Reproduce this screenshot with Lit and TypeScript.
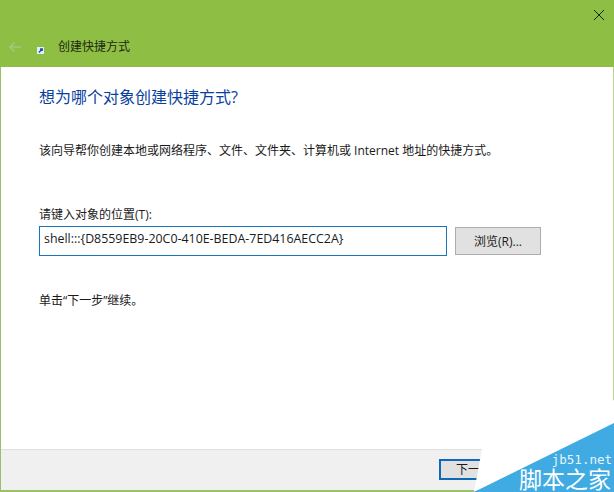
import { LitElement, html, css } from "lit";
import { customElement } from "lit/decorators.js";

@customElement("app-root")
export class AppRoot extends LitElement {
  static styles = css`
    :host {
      display: block;
      position: relative;
      width: 614px;
      height: 492px;
      overflow: hidden;
      font-family: "Open Sans", "Noto Sans CJK SC", sans-serif;
      font-size: 12px;
      color: #1a1a1a;
    }
    .win {
      box-sizing: border-box;
      width: 614px;
      height: 492px;
      display: flex;
      flex-direction: column;
      background: #fff;
      border-left: 1px solid #9cbf6a;
      border-right: 1px solid #b9d28f;
      border-bottom: 2px solid #9cbf6a;
    }
    .head {
      height: 67px;
      margin-left: -1px;
      margin-right: -1px;
      background: #8fbe44;
      display: flex;
      flex-direction: column;
      flex: none;
    }
    .close-row {
      display: flex;
      justify-content: flex-end;
      padding: 9px 9px 0 0;
      height: 14px;
    }
    .title-row {
      display: flex;
      align-items: center;
      margin-top: 15px;
      height: 18px;
      padding-left: 8px;
    }
    .back { width: 14px; height: 12px; }
    .app-icon { width: 7px; height: 7px; margin-left: 15px; margin-top: 7px; }
    .title {
      margin-left: 14px;
      font-size: 12px;
      line-height: 18px;
      color: #1c2a10;
      white-space: nowrap;
    }
    .body {
      flex: 1;
      padding: 20px 0 0 38px;
      display: flex;
      flex-direction: column;
      min-height: 0;
    }
    h1 {
      margin: 0;
      font-weight: 400;
      font-size: 16px;
      line-height: 20px;
      color: #0a3f9e;
      white-space: nowrap;
    }
    .intro { margin: 35px 0 0; line-height: 18px; white-space: nowrap; }
    .label { margin: 46px 0 0; line-height: 18px; white-space: nowrap; }
    .field-row { display: flex; align-items: center; gap: 8px; margin-top: 2px; }
    .input {
      box-sizing: border-box;
      width: 408px;
      height: 30px;
      border: 1px solid #1a76b8;
      padding: 0 4px 4px;
      line-height: 24px;
      font-size: 12.4px;
      white-space: nowrap;
      display: flex;
      align-items: center;
      background: #fff;
    }
    .browse {
      box-sizing: border-box;
      width: 86px;
      height: 28px;
      border: 1px solid #adadad;
      background: #e1e1e1;
      display: flex;
      align-items: center;
      justify-content: center;
    }
    .hint { margin: 36px 0 0; line-height: 18px; white-space: nowrap; }
    .foot {
      flex: none;
      box-sizing: border-box;
      height: 41px;
      background: #f0f0f0;
      border-top: 1px solid #dfdfdf;
      padding: 9px 0 0 438px;
    }
    .next {
      box-sizing: border-box;
      width: 86px;
      height: 21px;
      border: 2px solid #0f68b8;
      background: #e1e1e1;
      display: flex;
      align-items: center;
      justify-content: center;
      line-height: 16px;
    }
    .wm {
      position: absolute;
      left: 0;
      top: 0;
      width: 614px;
      height: 492px;
      pointer-events: none;
    }
    .wm-text {
      position: absolute;
      color: #fff;
      white-space: nowrap;
    }
    .wm-url {
      bottom: 25px;
      right: 2px;
      font-family: "DejaVu Sans Mono", monospace;
      font-size: 12.5px;
      line-height: 14px;
      color: #e8f5fb;
    }
    .wm-name {
      bottom: 3px;
      right: 3px;
      font-family: "Noto Sans CJK SC", sans-serif;
      font-size: 23px;
      line-height: 22px;
    }
  `;

  render() {
    return html`
      <div class="win">
        <div class="head">
          <div class="close-row">
            <svg width="12" height="12" viewBox="0 0 12 12">
              <path d="M1 1 L11 11 M11 1 L1 11" stroke="#16240a" stroke-width="1" fill="none" />
            </svg>
          </div>
          <div class="title-row">
            <svg class="back" viewBox="0 0 14 12">
              <path d="M13 6 H2 M6.5 1.5 L2 6 L6.5 10.5" stroke="#a8c878" stroke-width="1.6" fill="none" />
            </svg>
            <svg class="app-icon" viewBox="0 0 7 7">
              <rect width="7" height="7" fill="#e8eef6" />
              <path d="M2 5.5 L5 2 M3 2 H5.2 V4" stroke="#1c4fa8" stroke-width="1.4" fill="none" />
            </svg>
            <span class="title">创建快捷方式</span>
          </div>
        </div>
        <div class="body">
          <h1>想为哪个对象创建快捷方式?</h1>
          <p class="intro">该向导帮你创建本地或网络程序、文件、文件夹、计算机或 Internet 地址的快捷方式。</p>
          <div class="label">请键入对象的位置(T):</div>
          <div class="field-row">
            <div class="input">shell:::{D8559EB9-20C0-410E-BEDA-7ED416AECC2A}</div>
            <div class="browse">浏览(R)...</div>
          </div>
          <p class="hint">单击“下一步”继续。</p>
        </div>
        <div class="foot">
          <div class="next">下一步(N)</div>
        </div>
      </div>
      <svg class="wm" viewBox="0 0 614 492">
        <polygon points="474,492 482,449 614,400 614,426" fill="#ffffff" />
        <polygon points="474,492 614,423 614,492" fill="#3fabe2" />
      </svg>
      <span class="wm-text wm-url">jb51.net</span>
      <span class="wm-text wm-name">脚本之家</span>
    `;
  }
}
